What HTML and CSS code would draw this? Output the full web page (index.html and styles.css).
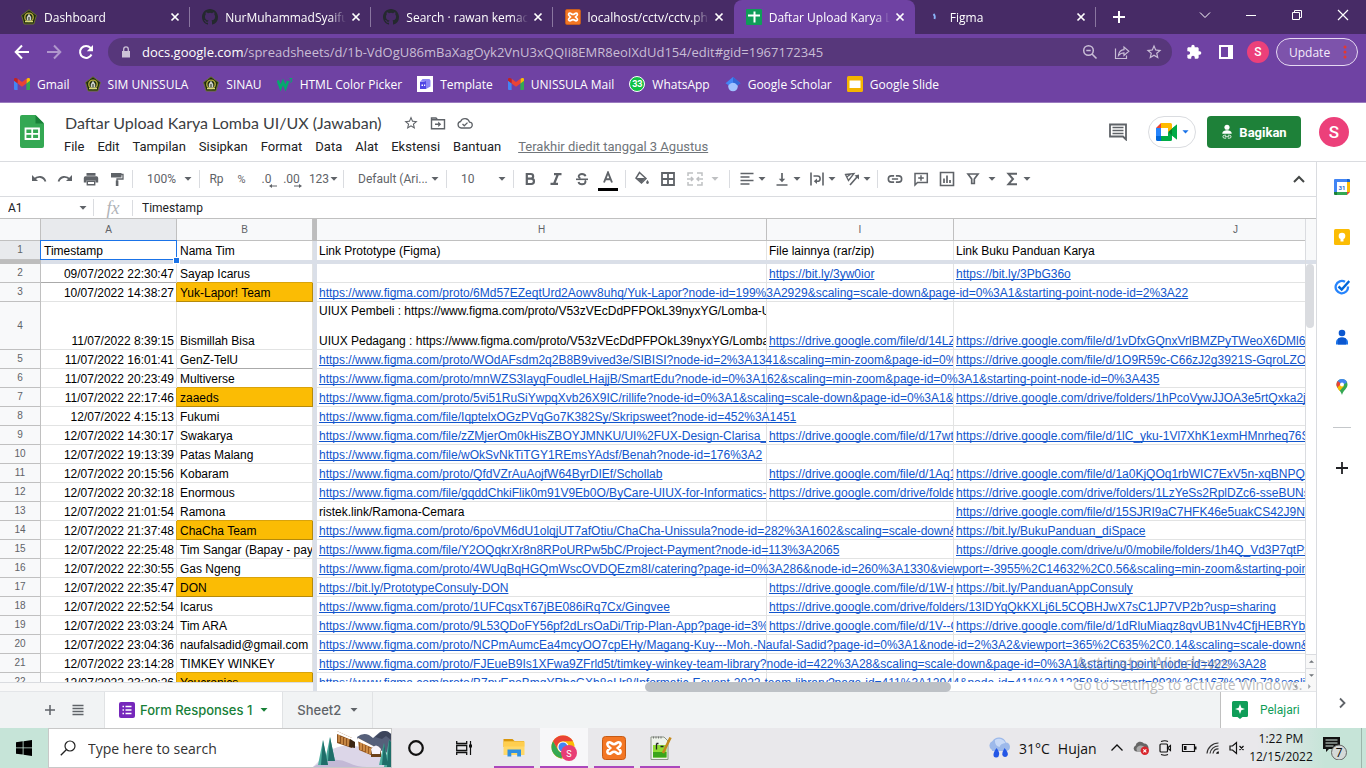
FILE: index.html
```html
<!DOCTYPE html>
<html lang="id">
<head>
<meta charset="utf-8">
<meta name="viewport" content="width=device-width, initial-scale=1">
<title>Daftar Upload Karya Lomba UI/UX (Jawaban)</title>
<link rel="stylesheet" href="styles.css">
</head>
<body>
<svg class="defs" aria-hidden="true">
  <symbol id="crest" viewBox="0 0 16 16"><path d="M8 .8 15.4 6.4 12.8 15H3.200L.6 6.400z" fill="#1d2a10" stroke="#6f7a28" stroke-width=".9"/><circle cx="8" cy="8.300" r="4.200" fill="none" stroke="#b3ab3c" stroke-width="1.400"/><path d="M8 4.800 10.200 8v3.600H5.800V8z" fill="#cfd2cb"/><path d="M4 12.600h8" stroke="#d8d87a" stroke-width="1.300"/><path d="M8 8v3" stroke="#1d2a10"/></symbol>
  <symbol id="github" viewBox="0 0 16 16"><path fill="#24292e" d="M8 0C3.58 0 0 3.58 0 8c0 3.54 2.29 6.53 5.47 7.59.4.07.55-.17.55-.38 0-.19-.01-.82-.01-1.49-2.01.37-2.53-.49-2.69-.94-.09-.23-.48-.94-.82-1.13-.28-.15-.68-.52-.01-.53.63-.01 1.08.58 1.23.82.72 1.21 1.87.87 2.33.66.07-.52.28-.87.51-1.07-1.78-.2-3.64-.89-3.64-3.95 0-.87.31-1.59.82-2.15-.08-.2-.36-1.02.08-2.12 0 0 .67-.21 2.2.82a7.6 7.6 0 0 1 4 0c1.53-1.04 2.2-.82 2.2-.82.44 1.1.16 1.92.08 2.12.51.56.82 1.27.82 2.15 0 3.07-1.87 3.75-3.65 3.95.29.25.54.73.54 1.48 0 1.07-.01 1.93-.01 2.2 0 .21.15.46.55.38A8 8 0 0 0 16 8c0-4.42-3.58-8-8-8z"/></symbol>
  <symbol id="xampp" viewBox="0 0 24 24"><rect x=".5" y=".5" width="23" height="23" rx="3" fill="#f37623" stroke="#c65a14"/><path d="M7.4 6.2c-2 0-2.6 2.2-1.4 3.6L8.2 12 6 14.200c-1.200 1.400-.6 3.600 1.400 3.600 1.800 0 2.300-2 4.600-2s2.800 2 4.600 2c2 0 2.600-2.200 1.400-3.600L15.800 12 18 9.800c1.200-1.400.6-3.600-1.400-3.600-1.800 0-2.300 2-4.600 2s-2.800-2-4.600-2z" fill="none" stroke="#fff" stroke-width="2.600"/></symbol>
  <symbol id="gmail" viewBox="0 0 16 12"><path d="M0 1.500V11a1 1 0 0 0 1 1h2.600V4.600z" fill="#4285f4"/><path d="M16 1.500V11a1 1 0 0 1-1 1h-2.600V4.600z" fill="#34a853"/><path d="M12.400 1v4.400L16 2.800V1.400C16 0 14.500-.4 13.500.2z" fill="#fbbc04"/><path d="M3.600 5.400V.8L8 4.100 12.400.8v4.600L8 8.700z" fill="#ea4335"/><path d="M0 1.400v1.400l3.600 2.600V.8L2.500.2C1.500-.4 0 0 0 1.400z" fill="#c5221f"/></symbol>
  <symbol id="x" viewBox="0 0 10 10"><path d="M1.500 1.500l7 7M8.500 1.500l-7 7" stroke="currentColor" stroke-width="1.700"/></symbol>
  <symbol id="arr" viewBox="0 0 8 4"><path d="M.5 0h7L4 3.800z" fill="currentColor"/></symbol>
  <symbol id="star" viewBox="0 0 24 24"><path fill="currentColor" d="M22 9.240l-7.190-.62L12 2 9.190 8.630 2 9.240l5.460 4.730L5.820 21 12 17.270 18.180 21l-1.630-7.030L22 9.240zM12 15.400l-3.760 2.270 1-4.280-3.320-2.880 4.380-.38L12 6.100l1.710 4.040 4.380.38-3.320 2.880 1 4.280L12 15.400z"/></symbol>
</svg>

<header class="browser">
  <div class="tabstrip">
    <div class="tabs">
      <div class="tab"><svg class="fav"><use href="#crest"/></svg><span class="tab-title">Dashboard</span><button class="close" aria-label="Close tab"><svg><use href="#x"/></svg></button></div>
      <div class="tab"><svg class="fav"><use href="#github"/></svg><span class="tab-title">NurMuhammadSyaifudin</span><button class="close" aria-label="Close tab"><svg><use href="#x"/></svg></button></div>
      <div class="tab"><svg class="fav"><use href="#github"/></svg><span class="tab-title">Search · rawan kemacetan</span><button class="close" aria-label="Close tab"><svg><use href="#x"/></svg></button></div>
      <div class="tab before-active"><svg class="fav"><use href="#xampp"/></svg><span class="tab-title">localhost/cctv/cctv.php</span><button class="close" aria-label="Close tab"><svg><use href="#x"/></svg></button></div>
      <div class="tab active"><svg class="fav" viewBox="0 0 16 16"><rect width="16" height="16" rx="1" fill="#0f9d58"/><path d="M2 6.500h12M8.500 2.500v11" stroke="#fff" stroke-width="2"/></svg><span class="tab-title">Daftar Upload Karya Lomba UI</span><button class="close" aria-label="Close tab"><svg><use href="#x"/></svg></button></div>
      <div class="tab"><svg class="fav" viewBox="0 0 16 16"><path d="M6.500 5q2 2 1 5" fill="none" stroke="#8ab4f8" stroke-width="1.800"/></svg><span class="tab-title">Figma</span><button class="close" aria-label="Close tab"><svg><use href="#x"/></svg></button></div>
    </div>
    <button class="newtab" aria-label="New tab"><svg viewBox="0 0 12 12"><path d="M6 0v12M0 6h12" stroke="#fff" stroke-width="2"/></svg></button>
    <div class="winctl">
      <button aria-label="Search tabs"><svg viewBox="0 0 12 12"><path d="M1 3.500l5 5 5-5" fill="none" stroke="#fff"/></svg></button>
      <button aria-label="Minimize"><svg viewBox="0 0 12 12"><path d="M1 6.500h10" stroke="#fff"/></svg></button>
      <button aria-label="Restore"><svg viewBox="0 0 12 12"><path d="M1.500 3.500h7v7h-7zM3.500 3V1.500h7v7H9" fill="none" stroke="#fff"/></svg></button>
      <button aria-label="Close"><svg viewBox="0 0 12 12"><path d="M1 1l10 10M11 1L1 11" stroke="#fff" stroke-width="1.200"/></svg></button>
    </div>
  </div>
  <div class="navbar">
    <button class="nav" aria-label="Back"><svg viewBox="0 0 16 16"><path d="M15 8H2M8 1.500L1.700 8 8 14.500" fill="none" stroke="#fff" stroke-width="2"/></svg></button>
    <button class="nav dim" aria-label="Forward"><svg viewBox="0 0 16 16"><path d="M1 8h13M8 1.500L14.300 8 8 14.500" fill="none" stroke="#fff" stroke-width="2"/></svg></button>
    <button class="nav" aria-label="Reload"><svg viewBox="0 0 16 16"><path d="M13.500 10.500A6 6 0 1 1 12.600 4L14 5.500" fill="none" stroke="#fff" stroke-width="2"/><path d="M15 1v6.200H8.800z" fill="#fff"/></svg></button>
    <div class="omnibox">
      <svg class="lock" viewBox="0 0 10 12"><path d="M1 5h8v6.500H1z" fill="#cdc3d7"/><path d="M2.700 5V3.200a2.300 2.300 0 0 1 4.600 0V5" fill="none" stroke="#cdc3d7" stroke-width="1.300"/></svg>
      <span class="url"><b>docs.google.com</b>/spreadsheets/d/1b-VdOgU86mBaXagOyk2VnU3xQQIi8EMR8eoIXdUd154/edit#gid=1967172345</span>
      <button aria-label="Zoom"><svg viewBox="0 0 16 16"><circle cx="6.500" cy="6.500" r="4.800" fill="none" stroke="#c9bdd6" stroke-width="1.500"/><path d="M10 10l4.500 4.500M4.300 6.500h4.400" stroke="#c9bdd6" stroke-width="1.600"/></svg></button>
      <button aria-label="Share"><svg viewBox="0 0 16 16"><path d="M1.500 4.500v10h11v-3M4.500 11.500c.5-4 2.800-5.600 5.500-5.800V3l4.800 4.300L10 11.400V8.800C7.500 8.800 6 9.600 4.500 11.500z" fill="none" stroke="#c9bdd6" stroke-width="1.200"/></svg></button>
      <button aria-label="Bookmark"><svg class="big"><use href="#star"/></svg></button>
    </div>
    <button class="nav" aria-label="Extensions"><svg viewBox="0 0 24 24"><path fill="#fff" d="M20.500 11H19V7c0-1.100-.9-2-2-2h-4V3.500a2.500 2.500 0 0 0-5 0V5H4c-1.100 0-2 .9-2 2v3.800h1.500a2.700 2.700 0 0 1 0 5.400H2V20c0 1.100.9 2 2 2h3.800v-1.500a2.700 2.700 0 0 1 5.400 0V22H17c1.100 0 2-.9 2-2v-4h1.500a2.500 2.500 0 0 0 0-5z"/></svg></button>
    <button class="nav" aria-label="Side panel"><svg viewBox="0 0 16 16"><path d="M2 2h12v12H2z" fill="none" stroke="#fff" stroke-width="2"/><path d="M10 2h4v12h-4z" fill="#fff"/></svg></button>
    <button class="nav" aria-label="Profile"><span class="avatar small">S</span></button>
    <button class="update">Update<svg viewBox="0 0 4 14"><circle cx="2" cy="2" r="1.500"/><circle cx="2" cy="7" r="1.500"/><circle cx="2" cy="12" r="1.500"/></svg></button>
  </div>
  <nav class="bookmarks">
    <a href="#"><svg class="fav"><use href="#gmail"/></svg>Gmail</a>
    <a href="#"><svg class="fav"><use href="#crest"/></svg>SIM UNISSULA</a>
    <a href="#"><svg class="fav"><use href="#crest"/></svg>SINAU</a>
    <a href="#"><svg class="fav" viewBox="0 0 16 16"><path d="M.8 4.500L3.500 12l2.500-6 2.500 6L11 5" fill="none" stroke="#04aa6d" stroke-width="2.600"/><path d="M12.500 2.500h2.500l-1.400 1.500q1.900 0 1.200 1.600-.8 1-2.300.2" fill="none" stroke="#04aa6d"/></svg>HTML Color Picker</a>
    <a href="#"><svg class="fav" viewBox="0 0 16 16"><rect width="16" height="16" fill="#fff"/><path d="M3 6l6-1v8H3z" fill="#4f46e5"/><path d="M5.500 3h7l1 1.500v6L9 13V5L3 6z" fill="#8b86f5"/><path d="M4.500 8.500h1.500v1.500H4.500zM7 8.500h1.200v1.500H7z" fill="#fff"/></svg>Template</a>
    <a href="#"><svg class="fav"><use href="#gmail"/></svg>UNISSULA Mail</a>
    <a href="#"><span class="wa">33</span>WhatsApp</a>
    <a href="#"><svg class="fav" viewBox="0 0 16 16"><circle cx="8" cy="10.500" r="4.800" fill="#a0c3ff"/><path d="M8 1L.5 7.200l3.200 2a5 5 0 0 1 8.600 0l3.200-2z" fill="#4285f4"/><path d="M8 1l7.500 6.200-3.200 2a5 5 0 0 0-4.300-2.700z" fill="#3367d6"/></svg>Google Scholar</a>
    <a href="#"><svg class="fav" viewBox="0 0 16 16"><rect width="16" height="16" rx="1.500" fill="#f4b400"/><path d="M2.500 4.500h11v7.500h-11z" fill="#fff"/></svg>Google Slide</a>
  </nav>
</header>

<main class="docs">
  <header class="dochead">
    <svg class="doclogo" viewBox="0 0 24 33"><path d="M2 0h13.500L24 8.500V31a2 2 0 0 1-2 2H2a2 2 0 0 1-2-2V2a2 2 0 0 1 2-2z" fill="#34a853"/><path d="M15.500 0L24 8.500h-8.500z" fill="#188038"/><path d="M5.500 13.500h13.500v10.500H5.500zM5.500 18.800H19M12.200 13.500V24" fill="none" stroke="#fff" stroke-width="1.800"/></svg>
    <div class="docinfo">
      <div class="titleline">
        <h1>Daftar Upload Karya Lomba UI/UX (Jawaban)</h1>
        <button aria-label="Bintangi"><svg><use href="#star"/></svg></button>
        <button aria-label="Pindahkan"><svg viewBox="0 0 16 16"><path d="M1.500 3h4.500l1.500 1.700h7v9h-13zM1.500 4.700h6" fill="none" stroke="currentColor" stroke-width="1.400"/><path d="M5 8.500h3.200V6.500l3 2.700-3 2.700V10H5z" fill="currentColor"/></svg></button>
        <button aria-label="Status dokumen"><svg viewBox="0 0 16 16"><path d="M4.200 13a3.300 3.300 0 0 1-.6-6.500 4.700 4.700 0 0 1 8.900.7 2.900 2.900 0 0 1-.3 5.800z" fill="none" stroke="currentColor" stroke-width="1.300"/><path d="M5.500 9l1.800 1.800 3.200-3.200" fill="none" stroke="currentColor" stroke-width="1.300"/></svg></button>
      </div>
      <nav class="menu">
        <button>File</button><button>Edit</button><button>Tampilan</button><button>Sisipkan</button><button>Format</button><button>Data</button><button>Alat</button><button>Ekstensi</button><button>Bantuan</button>
        <a class="lastedit" href="#">Terakhir diedit tanggal 3 Agustus</a>
      </nav>
    </div>
    <div class="docactions">
      <button class="comment" aria-label="Komentar"><svg viewBox="0 0 18 18"><path d="M1 1.500h16v15l-3-3H1z" fill="none" stroke="#5f6368" stroke-width="1.800"/><path d="M3.500 4.500h11M3.500 7.500h11M3.500 10.500h11" stroke="#5f6368" stroke-width="1.500"/></svg></button>
      <button class="meet" aria-label="Meet"><svg viewBox="0 0 22 18"><path d="M0 5h5v8H0z" fill="#2684fc"/><path d="M5 0v5H0z" fill="#ea4335"/><path d="M5 0h9.500a1.500 1.500 0 0 1 1.500 1.500V7l-4 2V5H5z" fill="#ffba00"/><path d="M0 13h5v5H1.500A1.500 1.500 0 0 1 0 16.500z" fill="#0066da"/><path d="M5 13h7V9l4 2v5.500a1.500 1.500 0 0 1-1.500 1.500H5z" fill="#00ac47"/><path d="M12 9l9-7.500v15z" fill="#00832d"/><path d="M16 5.500l5-4v15l-5-4z" fill="#00ac47"/></svg><svg class="arrow"><use href="#arr"/></svg></button>
      <button class="share"><svg viewBox="0 0 14 18"><circle cx="7" cy="3.500" r="3" fill="#fff"/><path d="M1.500 11c0-3 3-4 5.500-4s5.500 1 5.500 4z" fill="#fff"/><path d="M6 12.800H4a1.700 1.700 0 0 0 0 3.400h2M8 12.800h2a1.700 1.700 0 0 1 0 3.400H8M4.500 14.500h5" fill="none" stroke="#fff" stroke-width="1"/></svg>Bagikan</button>
      <span class="avatar">S</span>
    </div>
  </header>

  <div class="workspace">
    <section class="sheet">
      <div class="toolbar">
        <div class="grp first">
          <button aria-label="Urungkan"><svg viewBox="0 0 16 16"><path d="M1 4v6h6z" fill="currentColor"/><path d="M3 8.500q3-3 6.500-2.500 3.500.5 5 4.500" fill="none" stroke="currentColor" stroke-width="1.800"/></svg></button>
          <button aria-label="Ulangi"><svg viewBox="0 0 16 16"><path d="M15 4v6H9z" fill="currentColor"/><path d="M13 8.500q-3-3-6.500-2.500-3.500.5-5 4.500" fill="none" stroke="currentColor" stroke-width="1.800"/></svg></button>
          <button aria-label="Cetak"><svg viewBox="0 0 16 16"><path d="M3.500 2h9v2.800h-9zM2.500 5.300h11a1.700 1.700 0 0 1 1.700 1.700v4.500h-2.700V9.500h-9v2H.8V7a1.700 1.700 0 0 1 1.700-1.700z" fill="currentColor"/><path d="M4.300 10.300h7.400v3.400H4.300z" fill="none" stroke="currentColor" stroke-width="1.400"/></svg></button>
          <button aria-label="Format cat"><svg viewBox="0 0 16 16"><path d="M2 2h10.500v4.500H2z" fill="currentColor"/><path d="M12 3.500h2V8H8v2" fill="none" stroke="currentColor" stroke-width="1.300"/><path d="M6.800 9.500h2.600V15H6.800z" fill="currentColor"/></svg></button>
        </div>
        <div class="grp pick"><button>100%<svg class="arrow"><use href="#arr"/></svg></button></div>
        <div class="grp nums"><button>Rp</button><button class="pct">%</button><button class="dec">.0<svg viewBox="0 0 8 4"><path d="M8 2H2" stroke="currentColor"/><path d="M3 0v4L0 2z" fill="currentColor"/></svg></button><button class="dec">.00<svg viewBox="0 0 8 4"><path d="M0 2h6" stroke="currentColor"/><path d="M5 0v4l3-2z" fill="currentColor"/></svg></button><button class="fmt">123<svg class="arrow"><use href="#arr"/></svg></button></div>
        <div class="grp pick font"><button>Default (Ari...<svg class="arrow"><use href="#arr"/></svg></button></div>
        <div class="grp pick size"><button>10<svg class="arrow"><use href="#arr"/></svg></button></div>
        <div class="grp four">
          <button aria-label="Tebal"><svg viewBox="0 0 16 16"><path d="M4.800 3h4a2.300 2.300 0 0 1 0 4.700h-4zM4.800 7.700h4.500a2.600 2.600 0 0 1 0 5.300H4.800z" fill="none" stroke="currentColor" stroke-width="2.200"/></svg></button>
          <button aria-label="Miring"><svg viewBox="0 0 16 16"><path d="M6 3.200h7.500M2.500 12.800H10M9.800 3.500L6.200 12.500" fill="none" stroke="currentColor" stroke-width="2.200"/></svg></button>
          <button aria-label="Coret"><svg viewBox="0 0 16 16"><path d="M2 8.300h12" stroke="currentColor" stroke-width="1.600"/><path d="M11.500 5.200C11 3.500 9.700 3 8 3 6 3 4.600 4 4.700 5.500c.1 1 .8 1.500 1.800 2M4.500 11c.4 1.700 1.800 2.300 3.500 2.300 2 0 3.500-.9 3.500-2.500 0-.6-.2-1-.6-1.500" fill="none" stroke="currentColor" stroke-width="1.900"/></svg></button>
          <button class="color" aria-label="Warna teks"><svg viewBox="0 0 16 16"><path d="M4 11.500L8 1.500l4 10M5.300 8.300h5.400" fill="none" stroke="currentColor" stroke-width="1.900"/></svg></button>
        </div>
        <div class="grp four fills">
          <button aria-label="Warna isian"><svg viewBox="0 0 16 16"><path d="M5.500 1.500L12 7.500 7.500 12 2 7z" fill="none" stroke="currentColor" stroke-width="1.500"/><path d="M2.500 7h9L7.300 11.500z" fill="currentColor"/><path d="M13.500 9s1.400 1.700 1.400 2.500a1.400 1.400 0 0 1-2.800 0c0-.8 1.400-2.500 1.400-2.500z" fill="currentColor"/></svg></button>
          <button aria-label="Batas"><svg viewBox="0 0 16 16"><path d="M2 2h12v12H2zM8 2v12M2 8h12" fill="none" stroke="currentColor" stroke-width="1.800"/></svg></button>
          <button class="merge" aria-label="Gabungkan sel"><svg viewBox="0 0 16 16"><path d="M1 5V2h5M10 2h5v3M1 11v3h5M10 14h5v-3M0 8h6M16 8h-6M4 6l2 2-2 2M12 6l-2 2 2 2" fill="none" stroke="currentColor" stroke-width="1.500"/></svg><svg class="arrow"><use href="#arr"/></svg></button>
        </div>
        <div class="grp pairs">
          <button aria-label="Perataan horizontal"><svg viewBox="0 0 16 16"><path d="M1.500 2.500h13M1.500 6h9M1.500 9.500h13M1.500 13h9" stroke="currentColor" stroke-width="1.700"/></svg><svg class="arrow"><use href="#arr"/></svg></button>
          <button aria-label="Perataan vertikal"><svg viewBox="0 0 16 16"><path d="M2.500 14h11M8 2v7" stroke="currentColor" stroke-width="1.700"/><path d="M4.800 7.800h6.400L8 11.300z" fill="currentColor"/></svg><svg class="arrow"><use href="#arr"/></svg></button>
          <button aria-label="Pengemasan teks"><svg viewBox="0 0 16 16"><path d="M2 1.500v13M14 1.500v13" stroke="currentColor" stroke-width="1.600"/><path d="M4.500 5h4a2.600 2.600 0 0 1 0 5.300H6" fill="none" stroke="currentColor" stroke-width="1.500"/><path d="M8 7.500v5.500L4.800 10.300z" fill="currentColor"/></svg><svg class="arrow"><use href="#arr"/></svg></button>
          <button aria-label="Rotasi teks"><svg viewBox="0 0 16 16"><path d="M1.500 3.500L10 2.500 4.500 9.500zM3 5.800L7 3" fill="none" stroke="currentColor" stroke-width="1.300"/><path d="M6 14l7-8" stroke="currentColor" stroke-width="1.600"/><path d="M15 3.500v5L10.500 4.500z" fill="currentColor"/></svg><svg class="arrow"><use href="#arr"/></svg></button>
        </div>
        <div class="grp last">
          <button aria-label="Sisipkan link"><svg viewBox="0 0 18 16"><path d="M8 4.500H5a3.500 3.500 0 0 0 0 7h3M10 4.500h3a3.500 3.500 0 0 1 0 7h-3M5.500 8h7" fill="none" stroke="currentColor" stroke-width="1.800"/></svg></button>
          <button aria-label="Sisipkan komentar"><svg viewBox="0 0 16 16"><path d="M2 2.500h12.300v9H4.500L2 14z" fill="none" stroke="currentColor" stroke-width="1.500"/><path d="M8 4.200v5.600M5.200 7h5.600" stroke="currentColor" stroke-width="1.500"/></svg></button>
          <button aria-label="Sisipkan diagram"><svg viewBox="0 0 16 16"><path d="M1.500 1.500h13v13h-13z" fill="none" stroke="currentColor" stroke-width="1.600"/><path d="M5 7.500V12M8 4.500V12M11 9v3" stroke="currentColor" stroke-width="1.700"/></svg></button>
          <button aria-label="Filter"><svg viewBox="0 0 16 16"><path d="M3 3h10L9.300 8v4.500H6.700V8z" fill="none" stroke="currentColor" stroke-width="1.700"/></svg></button>
          <button class="only" aria-label="Tampilan filter"><svg class="arrow"><use href="#arr"/></svg></button>
          <button class="sigma" aria-label="Fungsi"><svg viewBox="0 0 16 16"><path d="M13 2.800H4.500L9 8l-4.500 5.200H13" fill="none" stroke="currentColor" stroke-width="2"/></svg><svg class="arrow"><use href="#arr"/></svg></button>
        </div>
        <button class="collapse" aria-label="Sembunyikan menu"><svg viewBox="0 0 12 8"><path d="M1 7l5-5 5 5" fill="none" stroke="#444746" stroke-width="2"/></svg></button>
      </div>

      <div class="formula">
        <label class="namebox"><input type="text" value="A1" aria-label="Kotak nama"><svg class="arrow"><use href="#arr"/></svg></label>
        <span class="fx">fx</span>
        <input class="fval" type="text" value="Timestamp" aria-label="Formula">
      </div>

      <div class="gridarea">
        <div class="viewport">
          <table class="grid">
            <colgroup><col class="c-n"><col class="c-a"><col class="c-a"><col class="c-gap"><col class="c-h"><col class="c-i"><col class="c-j"></colgroup>
            <thead>
              <tr class="cols"><th></th><th class="sel">A</th><th>B</th><th class="gap"></th><th>H</th><th>I</th><th>J</th></tr>
              <tr class="frozen"><th class="sel">1</th><td class="current">Timestamp</td><td>Nama Tim</td><td class="gap"></td><td>Link Prototype (Figma)</td><td>File lainnya (rar/zip)</td><td>Link Buku Panduan Karya</td></tr>
              <tr class="band"><th></th><td colspan="6"></td></tr>
            </thead>
            <tbody>
              <tr><th>2</th><td class="dk">09/07/2022 22:30:47</td><td class="gold-next">Sayap Icarus</td><td class="gap"></td><td></td><td><a href="#">https://bit.ly/3yw0ior</a></td><td><a href="#">https://bit.ly/3PbG36o</a></td></tr>
              <tr><th>3</th><td>10/07/2022 14:38:27</td><td class="gold">Yuk-Lapor! Team</td><td class="gap"></td><td><a href="#">https://www.figma.com/proto/6Md57EZeqtUrd2Aowv8uhq/Yuk-Lapor?node-id=199%3A2929&amp;scaling=scale-down&amp;page-id=0%3A1&amp;starting-point-node-id=2%3A22</a></td><td></td><td></td></tr>
              <tr class="tall"><th>4</th><td>11/07/2022 8:39:15</td><td>Bismillah Bisa</td><td class="gap"></td><td class="clip multi">UIUX Pembeli : https://www.figma.com/proto/V53zVEcDdPFPOkL39nyxYG/Lomba-U<br><br>UIUX Pedagang : https://www.figma.com/proto/V53zVEcDdPFPOkL39nyxYG/Lomba</td><td class="clip"><a href="#">https://drive.google.com/file/d/14LZ</a></td><td><a href="#">https://drive.google.com/file/d/1vDfxGQnxVrlBMZPyTWeoX6DMl6z8</a></td></tr>
              <tr><th>5</th><td>11/07/2022 16:01:41</td><td class="dk">GenZ-TelU</td><td class="gap"></td><td><div class="span2"><a href="#">https://www.figma.com/proto/WOdAFsdm2q2B8B9vived3e/SIBISI?node-id=2%3A1341&amp;scaling=min-zoom&amp;page-id=0%3</a></div></td><td></td><td><a href="#">https://drive.google.com/file/d/1O9R59c-C66zJ2g3921S-GqroLZOk</a></td></tr>
              <tr><th>6</th><td>11/07/2022 20:23:49</td><td class="gold-next">Multiverse</td><td class="gap"></td><td><a href="#">https://www.figma.com/proto/mnWZS3IayqFoudleLHajjB/SmartEdu?node-id=0%3A162&amp;scaling=min-zoom&amp;page-id=0%3A1&amp;starting-point-node-id=0%3A435</a></td><td></td><td></td></tr>
              <tr><th>7</th><td>11/07/2022 22:17:46</td><td class="gold">zaaeds</td><td class="gap"></td><td><div class="span2"><a href="#">https://www.figma.com/proto/5vi51RuSiYwpqXvb26X9IC/rillife?node-id=0%3A1&amp;scaling=scale-down&amp;page-id=0%3A1&amp;s</a></div></td><td></td><td><a href="#">https://drive.google.com/drive/folders/1hPcoVywJJOA3e5rtQxka2jd</a></td></tr>
              <tr><th>8</th><td>12/07/2022 4:15:13</td><td>Fukumi</td><td class="gap"></td><td><a href="#">https://www.figma.com/file/IqptelxOGzPVqGo7K382Sy/Skripsweet?node-id=452%3A1451</a></td><td></td><td></td></tr>
              <tr><th>9</th><td>12/07/2022 14:30:17</td><td>Swakarya</td><td class="gap"></td><td class="clip"><a href="#">https://www.figma.com/file/zZMjerOm0kHisZBOYJMNKU/UI%2FUX-Design-Clarisa_S</a></td><td class="clip"><a href="#">https://drive.google.com/file/d/17wtx</a></td><td><a href="#">https://drive.google.com/file/d/1lC_yku-1Vl7XhK1exmHMnrheq76S2</a></td></tr>
              <tr><th>10</th><td>12/07/2022 19:13:39</td><td>Patas Malang</td><td class="gap"></td><td><a href="#">https://www.figma.com/file/wOkSvNkTiTGY1REmsYAdsf/Benah?node-id=176%3A2</a></td><td></td><td></td></tr>
              <tr><th>11</th><td>12/07/2022 20:15:56</td><td>Kobaram</td><td class="gap"></td><td class="clip"><a href="#">https://www.figma.com/proto/QfdVZrAuAojfW64ByrDIEf/Schollab</a></td><td class="clip"><a href="#">https://drive.google.com/file/d/1Aq1</a></td><td><a href="#">https://drive.google.com/file/d/1a0KjQOq1rbWIC7ExV5n-xqBNPQ9</a></td></tr>
              <tr><th>12</th><td>12/07/2022 20:32:18</td><td>Enormous</td><td class="gap"></td><td class="clip"><a href="#">https://www.figma.com/file/gqddChkiFlik0m91V9Eb0O/ByCare-UIUX-for-Informatics-S</a></td><td class="clip"><a href="#">https://drive.google.com/drive/folder</a></td><td><a href="#">https://drive.google.com/drive/folders/1LzYeSs2RplDZc6-sseBUNs</a></td></tr>
              <tr><th>13</th><td>12/07/2022 21:01:54</td><td class="gold-next">Ramona</td><td class="gap"></td><td>ristek.link/Ramona-Cemara</td><td></td><td><a href="#">https://drive.google.com/file/d/15SJRI9aC7HFK46e5uakCS42J9Nk</a></td></tr>
              <tr><th>14</th><td>12/07/2022 21:37:48</td><td class="gold">ChaCha Team</td><td class="gap"></td><td><div class="span2"><a href="#">https://www.figma.com/proto/6poVM6dU1olqjUT7afOtiu/ChaCha-Unissula?node-id=282%3A1602&amp;scaling=scale-down&amp;</a></div></td><td></td><td><a href="#">https://bit.ly/BukuPanduan_diSpace</a></td></tr>
              <tr><th>15</th><td>12/07/2022 22:25:48</td><td class="clip">Tim Sangar (Bapay - pay</td><td class="gap"></td><td><a href="#">https://www.figma.com/file/Y2OQqkrXr8n8RPoURPw5bC/Project-Payment?node-id=113%3A2065</a></td><td></td><td><a href="#">https://drive.google.com/drive/u/0/mobile/folders/1h4Q_Vd3P7qtPx</a></td></tr>
              <tr><th>16</th><td>12/07/2022 22:30:55</td><td class="gold-next">Gas Ngeng</td><td class="gap"></td><td><a href="#">https://www.figma.com/proto/4WUqBqHGQmWscOVDQEzm8I/catering?page-id=0%3A286&amp;node-id=260%3A1330&amp;viewport=-3955%2C14632%2C0.56&amp;scaling=min-zoom&amp;starting-point-node</a></td><td></td><td></td></tr>
              <tr><th>17</th><td>12/07/2022 22:35:47</td><td class="gold">DON</td><td class="gap"></td><td><a href="#">https://bit.ly/PrototypeConsuly-DON</a></td><td class="clip"><a href="#">https://drive.google.com/file/d/1W-m</a></td><td><a href="#">https://bit.ly/PanduanAppConsuly</a></td></tr>
              <tr><th>18</th><td>12/07/2022 22:52:54</td><td>Icarus</td><td class="gap"></td><td><a href="#">https://www.figma.com/proto/1UFCqsxT67jBE086iRq7Cx/Gingvee</a></td><td><a href="#">https://drive.google.com/drive/folders/13IDYqQkKXLj6L5CQBHJwX7sC1JP7VP2b?usp=sharing</a></td><td></td></tr>
              <tr><th>19</th><td>12/07/2022 23:03:24</td><td>Tim ARA</td><td class="gap"></td><td class="clip"><a href="#">https://www.figma.com/proto/9L53QDoFY56pf2dLrsOaDi/Trip-Plan-App?page-id=3%3</a></td><td class="clip"><a href="#">https://drive.google.com/file/d/1V--G</a></td><td><a href="#">https://drive.google.com/file/d/1dRluMiaqz8qvUB1Nv4CfjHEBRYbs</a></td></tr>
              <tr><th>20</th><td>12/07/2022 23:04:36</td><td>naufalsadid@gmail.com</td><td class="gap"></td><td><a href="#">https://www.figma.com/proto/NCPmAumcEa4mcyOO7cpEHy/Magang-Kuy---Moh.-Naufal-Sadid?page-id=0%3A1&amp;node-id=2%3A2&amp;viewport=365%2C635%2C0.14&amp;scaling=scale-down&amp;start</a></td><td></td><td></td></tr>
              <tr><th>21</th><td>12/07/2022 23:14:28</td><td class="gold-next">TIMKEY WINKEY</td><td class="gap"></td><td><a href="#">https://www.figma.com/proto/FJEueB9Is1XFwa9ZFrld5t/timkey-winkey-team-library?node-id=422%3A28&amp;scaling=scale-down&amp;page-id=0%3A1&amp;starting-point-node-id=422%3A28</a></td><td></td><td></td></tr>
              <tr><th>22</th><td>12/07/2022 23:29:26</td><td class="gold">Youcronics</td><td class="gap"></td><td><a href="#">https://www.figma.com/proto/B7pyEnoBmqYRhcGXh8eUr8/Informatic-Eevent-2022-team-library?page-id=411%3A12944&amp;node-id=411%3A12258&amp;viewport=992%2C1167%2C0.72&amp;scaling</a></td><td></td><td></td></tr>
            </tbody>
          </table>
        </div>
        <div class="vscroll"><div class="vhead"></div><div class="vtrack"><div class="vthumb"></div></div><button aria-label="Ke atas"><svg viewBox="0 0 8 4"><path d="M4 0l4 4H0z" fill="#70757a"/></svg></button><button aria-label="Ke bawah"><svg viewBox="0 0 8 4"><path d="M0 0h8L4 4z" fill="#70757a"/></svg></button></div>
      </div>
      <div class="hscroll"><div class="hpad"></div><div class="hgap"></div><div class="htrack"><div class="hthumb"></div></div><button aria-label="Ke kiri"><svg viewBox="0 0 4 8"><path d="M4 0v8L0 4z" fill="#9aa0a6"/></svg></button><button aria-label="Ke kanan"><svg viewBox="0 0 4 8"><path d="M0 0v8l4-4z" fill="#9aa0a6"/></svg></button></div>

      <div class="sheetbar">
        <button class="add" aria-label="Tambah sheet"><svg viewBox="0 0 10 10"><path d="M5 0v10M0 5h10" stroke="#5f6368" stroke-width="1.500"/></svg></button>
        <button class="list" aria-label="Semua sheet"><svg viewBox="0 0 12 12"><path d="M.5 1.500h11M.5 4.500h11M.5 7.500h11M.5 10.500h11" stroke="#5f6368" stroke-width="1.600"/></svg></button>
        <button class="stab on"><svg class="fav" viewBox="0 0 16 16"><rect width="16" height="16" rx="2" fill="#7627bb"/><path d="M3.500 4.500h1.500M6.500 4.500h6M3.500 8h1.500M6.500 8h6M3.500 11.500h1.500M6.500 11.500h6" stroke="#fff" stroke-width="1.500"/></svg>Form Responses 1<svg class="arrow"><use href="#arr"/></svg></button>
        <button class="stab">Sheet2<svg class="arrow"><use href="#arr"/></svg></button>
        <button class="explore"><svg viewBox="0 0 18 18"><path d="M2 0h12.500A1.500 1.500 0 0 1 16 1.500v13a1.500 1.500 0 0 1-1.500 1.500h-4L8 18l-2.500-2h-4A1.500 1.500 0 0 1 0 14.500v-13A1.500 1.500 0 0 1 1.500 0z" fill="#0f9d58"/><path d="M8 3l1.300 3.700L13 8 9.300 9.300 8 13 6.700 9.300 3 8l3.700-1.300z" fill="#fff"/></svg>Pelajari</button>
      </div>
    </section>

    <aside class="side">
      <button aria-label="Kalender"><svg viewBox="0 0 16 16"><path d="M1 0h12v3H3v10H0V1a1 1 0 0 1 1-1z" fill="#4285f4"/><path d="M13 0h2a1 1 0 0 1 1 1v2h-3z" fill="#1967d2"/><path d="M13 3h3v10h-3z" fill="#fbbc04"/><path d="M3 13h10v3H3z" fill="#34a853"/><path d="M0 13h3v3H1a1 1 0 0 1-1-1z" fill="#188038"/><path d="M13 13h3l-3 3z" fill="#ea4335"/><path d="M3 3h10v10H3z" fill="#fff"/><text x="8" y="10.800" text-anchor="middle" class="cal">31</text></svg></button>
      <button aria-label="Keep"><svg viewBox="0 0 16 16"><rect width="16" height="16" rx="1.500" fill="#fbbc04"/><circle cx="8" cy="7" r="3.300" fill="#fff"/><path d="M6.500 10h3v2.500h-3z" fill="#fff"/></svg></button>
      <button aria-label="Tasks"><svg viewBox="0 0 16 16"><path d="M14 7.500A6.200 6.200 0 1 1 11 2.800" fill="none" stroke="#2684fc" stroke-width="2.300"/><path d="M4.500 7.500l3.200 3L15.300 2" fill="none" stroke="#0066da" stroke-width="2.400"/></svg></button>
      <button aria-label="Kontak"><svg viewBox="0 0 16 16"><circle cx="8" cy="4" r="3.300" fill="#0b57d0"/><path d="M2 13.500C2 10.500 4.500 8.500 8 8.500s6 2 6 5V15.500H2z" fill="#1a73e8"/><path d="M4 9.600Q8 7.500 12 9.600V15.500H4z" fill="#0b57d0"/></svg></button>
      <button aria-label="Maps"><svg viewBox="0 0 16 16"><path d="M8 0a5.500 5.500 0 0 1 5.500 5.500C13.500 9.500 9.500 11 8 16 6.500 11 2.500 9.500 2.500 5.500A5.500 5.500 0 0 1 8 0z" fill="#34a853"/><path d="M8 0a5.500 5.500 0 0 1 5 3.200L6.500 8 3.500 2.300A5.500 5.500 0 0 1 8 0z" fill="#4285f4"/><path d="M3.700 2L8 5.500 3.500 8.800A6 6 0 0 1 3.700 2z" fill="#ea4335"/><path d="M3.300 8.500L7 5l3 2-4.500 5z" fill="#fbbc04"/><circle cx="8" cy="5.500" r="2" fill="#fff"/></svg></button>
      <hr>
      <button class="plus" aria-label="Dapatkan add-on"><svg viewBox="0 0 12 12"><path d="M6 0v12M0 6h12" stroke="#202124" stroke-width="1.800"/></svg></button>
      <button class="hide" aria-label="Sembunyikan panel samping"><svg viewBox="0 0 12 12"><path d="M4 1.500L8.500 6 4 10.500" fill="none" stroke="#5f6368" stroke-width="1.800"/></svg></button>
    </aside>
  </div>
</main>

<footer class="taskbar">
  <button class="start" aria-label="Start"><svg viewBox="0 0 16 16"><path d="M0 2.300L6.700 1.300v6.200H0zM7.500 1.200L16 0v7.500H7.500zM0 8.300h6.700v6.300L0 13.700zM7.500 8.300H16V16l-8.500-1.200z"/></svg></button>
  <label class="search">
    <svg class="lens" viewBox="0 0 16 16"><circle cx="10" cy="6" r="5" fill="none" stroke="#222" stroke-width="1.200"/><path d="M6.500 9.500L.8 15.200" stroke="#222" stroke-width="1.300"/></svg>
    <input type="text" placeholder="Type here to search">
    <svg class="art" viewBox="0 0 78 38"><path d="M44 8q6-5 12-2l4 3 7-6q6-3 11 2v20L46 14z" fill="#56607a"/><path d="M62 8l6-5q6-3 10 2v6l-5-4-4 3z" fill="#3d455c"/><path d="M0 38L16 22q8-5 20-6 20 2 42 14v8z" fill="#dcd6e8"/><path d="M0 38q20-12 36-4 8 4 18 4z" fill="#c3b9d6"/><path d="M24 2l15 7v10l-15-5z" fill="#8d5320"/><path d="M24 2l17 8v2L24 5z" fill="#fff"/><path d="M26 6v7M29 8v7M32 9v7M35 10v7" stroke="#d8964f" stroke-width="1.500"/><path d="M37 10l5 3v6l-6-1z" fill="#3c2613"/><path d="M45 9l15 8v10l-14-6z" fill="#9c5d24"/><path d="M45 9l17 9v2L44 12z" fill="#fff"/><path d="M48 14v7M51 15v7M54 17v7M57 19v6" stroke="#dd9a50" stroke-width="1.500"/><path d="M58 20q5-6 10 0v8H58z" fill="#6b4018"/><path d="M58 20q5-7 10 0l-1 5h-8z" fill="#f7f4fb"/><path d="M5 36l5-25 5 25zM12 32l5-24 5 24z" fill="#4fae9f"/><path d="M8 36l2-25 5 25zM15 32l2-24 5 24z" fill="#1f6e69"/><path d="M66 36l5-22 4 22zM71 38l5-27 2 2v25z" fill="#4fae9f"/><path d="M69 36l2-22 4 22zM74 38l2-27 2 2v25z" fill="#1f6e69"/></svg>
  </label>
  <button class="tk" aria-label="Cortana"><svg viewBox="0 0 16 16"><circle cx="8" cy="8" r="6.800" fill="none" stroke="#111" stroke-width="2.200"/></svg></button>
  <button class="tk" aria-label="Task view"><svg viewBox="0 0 16 16"><path d="M.7 1v2.500h10V1M.7 15v-2.500h10V15M.7 5.500h10v5H.7z" fill="none" stroke="#111" stroke-width="1.300"/><path d="M14.500 1v14" stroke="#111" stroke-width="1.200"/><path d="M13 4.500h3v3h-3z" fill="#111"/></svg></button>
  <div class="apps">
    <button class="run" aria-label="File Explorer"><svg class="app" viewBox="0 0 24 24"><path d="M1.500 3h9l2 2h9.500v6H1.500z" fill="#d9960b"/><path d="M1.500 5.500h21V19h-21z" fill="#ffd868"/><path d="M1.500 5.500h21v5h-21z" fill="#ffc83d" opacity=".6"/><path d="M5.500 20.500v-7h13.500v7h-3.800v-3.500H9.300v3.500z" fill="#2f8fe0"/></svg></button>
    <button class="run focus" aria-label="Google Chrome"><svg class="app wide" viewBox="0 0 26 26"><circle cx="12" cy="12" r="11.500" fill="#fbbc04"/><path d="M2 6.200A11.500 11.500 0 0 1 22 6.200H12A5.800 5.800 0 0 0 7 15z" fill="#ea4335"/><path d="M2 6.200l5 8.700a5.800 5.800 0 0 0 5 2.900l-1.500 5.600A11.500 11.500 0 0 1 2 6.200z" fill="#34a853"/><circle cx="12" cy="12" r="5.600" fill="#fff"/><circle cx="12" cy="12" r="4.500" fill="#4285f4"/><circle cx="18" cy="18" r="8" fill="#e83e76"/><text x="18" y="21.500" text-anchor="middle" class="badge-s">S</text></svg></button>
    <button class="run" aria-label="XAMPP"><svg class="app"><use href="#xampp"/></svg></button>
    <button class="run" aria-label="Notepad++"><svg class="app" viewBox="0 0 24 24"><path d="M3 1h13l4 4v18.500H3z" fill="#eef3ea" stroke="#8b9486"/><path d="M5 9h13.500v12.500H5z" fill="#8fdc35"/><path d="M5 16h13.500v5.500H5z" fill="#3aa51b"/><path d="M8.500 7.500v6M8.500 7.500h2M12.500 10.500h3" stroke="#222" stroke-width="1.300"/><path d="M22.500 1.500L15 17" stroke="#c48a1c" stroke-width="2.600"/><path d="M5 1.500h10" stroke="#777" stroke-dasharray="1 1.500" stroke-width="2"/></svg></button>
  </div>
  <div class="tray">
    <button class="weather"><svg viewBox="0 0 24 22"><path d="M5 13a5 5 0 0 1 .5-9A7.500 7.500 0 0 1 19 5.500 4.300 4.300 0 0 1 19.500 14H5z" fill="#9db9ea"/><path d="M8 3a7 7 0 0 1 10.500 3q-5 .5-6 4-5-1-4.500-7z" fill="#c9daf7"/><path d="M9.500 11q3.500 4.500 2.500 7a2.700 2.700 0 0 1-5.500-.5q0-2.500 3-6.500zM17.500 11q4 4.500 3.300 7a2.900 2.900 0 0 1-5.600-.5q0-2.500 2.300-6.500z" fill="#2457e6"/></svg><span>31°C</span><span>Hujan</span></button>
    <button aria-label="Ikon tersembunyi"><svg viewBox="0 0 16 16"><path d="M2.500 10.500L8 5l5.500 5.500" fill="none" stroke="#111" stroke-width="1.300"/></svg></button>
    <button aria-label="OneDrive"><svg viewBox="0 0 16 16"><path d="M3 11.500a3 3 0 0 1-.5-5.700A4.800 4.800 0 0 1 11 3.500a4.500 4.500 0 0 1 4.500 5l-5 3z" fill="#666"/><path d="M4 11q-2-4 3-5.500 5 0 5 3l-3 3z" fill="#aaa"/><circle cx="11.800" cy="10.800" r="4.200" fill="#d9272e"/><path d="M10.300 9.300l3 3M13.300 9.300l-3 3" stroke="#fff" stroke-width="1.100"/></svg></button>
    <button aria-label="Kamera"><svg viewBox="0 0 16 16"><rect x="3" y="4" width="7.500" height="8" rx="1" fill="none" stroke="#111" stroke-width="1.200"/><path d="M10.500 8l3-2.500v5zM4 1.500q4-1.500 7 0M4 14.500q4 1.500 7 0" fill="none" stroke="#111" stroke-width="1.100"/></svg></button>
    <button aria-label="Baterai"><svg viewBox="0 0 16 16"><path d="M1.500 4.500h12v7h-12z" fill="none" stroke="#111" stroke-width="1.200"/><path d="M14 6.500h1.500v3H14zM3 6h2.500v4H3z" fill="#111"/></svg></button>
    <button aria-label="Wi-Fi"><svg viewBox="0 0 16 16"><path d="M2 13.500A11.500 11.500 0 0 1 13.500 3M5 13.500A8.500 8.500 0 0 1 13.500 6M8 13.500A5.500 5.500 0 0 1 13.500 8.800" fill="none" stroke="#333" stroke-width="1.200"/><path d="M11 13.800a3 3 0 0 1 2.800-2.600v2.600z" fill="#111"/></svg></button>
    <button aria-label="Suara"><svg viewBox="0 0 16 16"><path d="M1 6h2.500L7.500 2.500v11L3.500 10H1zM10.500 6l4 4M14.500 6l-4 4" fill="none" stroke="#111" stroke-width="1.200"/></svg></button>
    <button class="clock">1:22 PM<br>12/15/2022</button>
    <button class="notif" aria-label="Notifikasi"><svg viewBox="0 0 24 24"><path d="M0 1h17v12H6l-3 3v-3H0z" fill="#111"/><path d="M2.500 4h12M2.500 7h12M2.500 10h8" stroke="#d6e8e0" stroke-width="1.200"/><circle cx="16" cy="16.500" r="7.500" fill="#d4d9d8" stroke="#666"/><text x="16" y="21" text-anchor="middle" class="badge-n">7</text></svg></button>
    <button class="desk" aria-label="Tampilkan desktop"></button>
  </div>
</footer>
<div class="watermark"><p class="wm1">Activate Windows</p><p class="wm2">Go to Settings to activate Windows.</p></div>
</body>
</html>
```
FILE: styles.css
```css
* { box-sizing: border-box; }
body { margin: 0; height: 100vh; display: flex; flex-direction: column; overflow: hidden; font-family: Roboto, "Liberation Sans", sans-serif; color: #202124; background: #fff; }
button { display: flex; align-items: center; justify-content: center; border: 0; background: none; padding: 0; margin: 0; color: inherit; font: inherit; white-space: nowrap; }
input { border: 0; outline: 0; background: none; padding: 0; font: inherit; color: inherit; min-width: 0; }
svg { width: 16px; height: 16px; flex: none; display: block; }
a { color: inherit; text-decoration: none; }
.defs { position: absolute; width: 0; height: 0; }
.arrow { width: 8px; height: 4px; }

/* Browser chrome */
.browser { flex: none; background: #6f42a3; color: #fff; font: 12px "Open Sans", sans-serif; border-bottom: 1px solid #9a7bbf; }
.tabstrip { display: flex; height: 34px; background: #472b66; }
.tabs { display: flex; width: 1096px; padding-left: 9px; }
.tab { flex: 1; min-width: 0; display: flex; align-items: center; gap: 7px; padding: 0 7px 0 12px; background: linear-gradient(#8a76a0, #8a76a0) right 7px / 1px 20px no-repeat; }
.tab.before-active { background: none; }
.tab.active { background: #6f42a3; border-radius: 8px 8px 0 0; }
.tab-title { flex: 1; min-width: 0; margin-right: -5px; overflow: hidden; white-space: nowrap; mask-image: linear-gradient(to right, #000 calc(100% - 16px), transparent); }
.close { width: 16px; height: 16px; }
.close svg { width: 10px; height: 10px; }
.newtab { width: 46px; }
.newtab svg { width: 12px; height: 12px; }
.winctl { margin-left: auto; display: flex; }
.winctl button { width: 46px; height: 29px; }
.winctl svg { width: 12px; height: 12px; }
.navbar { display: flex; height: 36px; align-items: center; padding: 0 8px 0 6px; }
.nav { width: 32px; height: 28px; }
.dim { opacity: .45; }
.omnibox { flex: 1; margin: 0 6px; height: 28px; border-radius: 14px; background: #57377b; display: flex; align-items: center; padding: 0 2px 0 13px; color: #c9bdd6; }
.lock { width: 10px; height: 12px; margin-right: 11px; }
.url { flex: 1; min-width: 0; overflow: hidden; white-space: nowrap; font-size: 13px; }
.url b { font-weight: 400; color: #fff; }
.omnibox button { width: 32px; height: 28px; }
.omnibox .big { width: 18px; height: 18px; }
.avatar { width: 30px; height: 30px; border-radius: 50%; background: #ec407a; color: #fff; font: 500 17px/30px Roboto, sans-serif; text-align: center; }
.avatar.small { width: 22px; height: 22px; font-size: 12px; line-height: 22px; }
.update { width: 82px; height: 28px; margin-left: 2px; border: 1px solid #e6d9f2; border-radius: 14px; background: #7d53ab; justify-content: space-between; padding: 0 10px 0 12px; color: #f5edfb; }
.update svg { width: 4px; height: 14px; fill: #e8372c; }
.bookmarks { display: flex; gap: 15px; height: 32px; align-items: center; padding: 0 14px 4px; }
.bookmarks a { display: flex; align-items: center; gap: 7px; white-space: nowrap; }
.wa { width: 16px; height: 16px; border-radius: 50%; background: #12c245; border: 1px solid #fff; font: 700 9px/14px Roboto, sans-serif; text-align: center; }

/* Document header */
.docs { flex: 1; min-height: 0; display: flex; flex-direction: column; }
.dochead { display: flex; flex: none; height: 58px; padding: 0 17px 0 20px; }
.doclogo { width: 24px; height: 33px; margin: 12px 20px 0 0; }
.docinfo { flex: 1; min-width: 0; padding-top: 8px; }
.titleline { display: flex; align-items: center; height: 23px; gap: 11px; color: #5f6368; }
.titleline h1 { margin: 0 10px 0 1px; font: 400 16px Lato, sans-serif; color: #3c4043; white-space: nowrap; }
.menu { display: flex; gap: 13px; height: 25px; align-items: center; font-size: 13px; }
.lastedit { color: #70757a; text-decoration: underline; margin-left: 4px; white-space: nowrap; }
.docactions { display: flex; align-items: center; gap: 11px; }
.comment { width: 18px; margin-right: 10px; }
.comment svg { width: 18px; height: 18px; }
.meet { width: 48px; height: 32px; border: 1px solid #dadce0; border-radius: 16px; gap: 4px; color: #1a73e8; }
.meet svg:first-child { width: 22px; height: 18px; }
.meet .arrow { width: 7px; }
.share { width: 94px; height: 32px; border-radius: 4px; background: #1e8139; color: #fff; gap: 6px; font-weight: 700; font-size: 13px; }
.share svg { width: 12px; height: 16px; }
.docactions .avatar { margin-left: 7px; }

/* Workspace */
.workspace { flex: 1; min-height: 0; display: flex; }
.sheet { flex: 1; min-width: 0; display: flex; flex-direction: column; }
.toolbar { display: flex; align-items: center; flex: none; height: 36px; border-top: 1px solid #dadce0; border-bottom: 1px solid #dadce0; color: #5f6368; font-size: 12px; }
.grp { display: flex; align-items: center; height: 18px; border-right: 1px solid #dadce0; }
.grp button { width: 26px; height: 26px; flex: none; }
.grp.first { padding: 0 2px 0 26px; }
.grp.pick button { width: 66px; justify-content: space-between; padding: 0 7px 0 14px; }
.grp.font button { width: 102px; }
.grp.nums { padding-left: 4px; }
.grp.nums button { width: 25px; position: relative; }
.grp.nums .fmt { width: 39px; gap: 1px; }
.pct { font-size: 11px; }
.dec svg { position: absolute; width: 8px; height: 4px; right: 2px; bottom: 4px; }
.four { padding: 0 4px 0 3px; }
.grp .color { box-shadow: inset 0 -3px #000; width: 20px; height: 24px; margin: 0 3px; }
.grp .merge { width: 44px; gap: 8px; opacity: .4; }
.pairs { padding: 0 2px 0 5px; }
.grp.pairs button { width: 35px; gap: 3px; }
.grp.last { border: 0; padding-left: 4px; }
.grp .only { width: 12px; }
.grp .sigma { width: 38px; gap: 3px; }
.collapse { margin-left: auto; width: 34px; height: 26px; }
.collapse svg { width: 12px; height: 8px; }
.formula { display: flex; align-items: center; flex: none; height: 21px; font-size: 12px; }
.namebox { display: flex; align-items: center; width: 94px; height: 17px; border-right: 1px solid #dadce0; padding: 0 6px 0 8px; color: #5f6368; }
.namebox input { flex: 1; color: #202124; }
.fx { width: 39px; border-right: 1px solid #dadce0; text-align: center; font: italic 18px/16px "Liberation Serif", serif; color: #b0b3b8; }
.fval { flex: 1; padding-left: 9px; }

/* Grid */
.gridarea { flex: 1; min-height: 0; display: flex; border-top: 1px solid #c0c0c0; }
.viewport { flex: 1; min-width: 0; overflow: hidden; }
.grid { table-layout: fixed; width: 1518px; border-collapse: separate; border-spacing: 0; font: 12px/18px "Liberation Sans", Arial, sans-serif; color: #000; }
.c-n { width: 41px; } .c-a { width: 136px; } .c-gap { width: 4px; } .c-h { width: 450px; } .c-i { width: 187px; } .c-j { width: 564px; }
.grid th { background: #f8f9fa; border-right: 1px solid #c0c0c0; border-bottom: 1px solid #c0c0c0; padding: 0; font-weight: 400; font-size: 10px; color: #5f6368; text-align: center; }
.grid td { height: 19px; border-right: 1px solid #e2e3e3; border-bottom: 1px solid #e2e3e3; padding: 0 2px; white-space: nowrap; vertical-align: bottom; }
.grid tbody td { padding-top: 2px; line-height: 16px; }
.grid td:nth-child(3) { padding-left: 3px; }
.grid tbody td:nth-child(2) { text-align: right; }
.cols th { height: 22px; }
.grid .sel { background: #e8eaed; }
.grid .gap { background: #dadfe8; border: 0; padding: 0; }
.grid th.gap { background: #bdbdbd; }
.grid .current { position: relative; padding-left: 3px; }
.current::before { content: ""; position: absolute; inset: -1px -1px 0 -1px; border: 1px solid #1a73e8; }
.current::after { content: ""; position: absolute; right: -3px; bottom: -3px; width: 5px; height: 5px; background: #1a73e8; box-shadow: 0 0 0 1px #fff; }
.frozen td { border-bottom: 0; }
.band th, .grid .band td { height: 4px; padding: 0; line-height: 0; border: 0; background: #dadfe8; }
.grid .band th { background: #bdbdbd; }
.grid .tall td { height: 48px; }
.grid tbody .multi { line-height: 15px; padding-top: 0; }
.grid .clip, .span2 { overflow: hidden; }
.span2 { width: 634px; }
.grid .dk { border-bottom-color: #aaa; }
.grid .gold { background: #fbbc04; border-color: #b58a0b; box-shadow: -1px 0 #d9a30c; }
.grid .gold-next { border-bottom-color: #d9a30c; }
.grid a { color: #1155cc; text-decoration: underline; text-decoration-skip-ink: none; text-underline-offset: 1px; }
.vscroll { width: 11px; flex: none; display: flex; flex-direction: column; border-left: 1px solid #dadce0; }
.vhead { height: 45px; background: #f8f9fa; border-bottom: 4px solid #dadfe8; }
.vtrack { flex: 1; padding-right: 1px; }
.vthumb { width: 8px; height: 64px; border-radius: 4px; background: #dadce0; }
.vscroll button { height: 14px; border-top: 1px solid #dadce0; background: #f8f8f8; }
.vscroll svg { width: 5px; height: 3px; }
.hscroll { flex: none; display: flex; height: 10px; border-bottom: 1px solid #e3e5e8; }
.hpad { width: 313px; background: #f8f8f8; border-top: 1px solid #dadce0; }
.hgap { width: 4px; background: #dadfe8; }
.htrack { flex: 1; display: flex; padding-left: 328px; }
.hthumb { width: 306px; height: 10px; border-radius: 5px; background: #bdc1c6; }
.hscroll button { width: 14px; background: #f8f8f8; }
.hscroll svg { width: 3px; height: 5px; }
.sheetbar { flex: none; display: flex; height: 36px; background: #f1f3f4; padding-left: 36px; font: 500 13px Inter, sans-serif; color: #5f6368; }
.add, .list { width: 28px; }
.add svg { width: 10px; height: 10px; }
.list svg { width: 12px; height: 12px; }
.stab { padding: 0 14px; gap: 6px; border-right: 1px solid #e0e2e4; }
.stab.on { margin-left: 12px; background: #fff; color: #188038; gap: 5px; border-left: 1px solid #e0e2e4; }
.stab .arrow { margin-left: 3px; }
.explore { width: 96px; margin-left: auto; background: #fff; border-left: 1px solid #c0c0c0; color: #0f9d58; font: 12px Roboto, sans-serif; justify-content: flex-start; padding-left: 11px; gap: 10px; }
.explore svg { width: 18px; height: 18px; }
.side { width: 50px; flex: none; display: flex; flex-direction: column; align-items: center; border: 1px solid #dadce0; border-width: 1px 0 0 1px; padding: 17px 0 14px; gap: 34px; }
.side hr { width: 18px; height: 1px; margin: -2px 0 0; border: 0; background: #c4c7ca; }
.plus svg, .hide svg { width: 12px; height: 12px; }
.hide { margin-top: auto; padding-bottom: 5px; }
.cal { font: 700 6px Roboto, sans-serif; fill: #1967d2; }

/* Taskbar */
.taskbar { flex: none; display: flex; height: 40px; background: linear-gradient(to right, #e9e8eb 92%, #c6e4d8 97%); font: 14px "Open Sans", sans-serif; color: #111; }
.start { width: 48px; background: #c6e4d8; }
.search { display: flex; align-items: center; width: 344px; height: 40px; background: #fff; border: 1px solid #c8c8c8; padding-left: 11px; color: #333; }
.search input { flex: 1; padding-left: 12px; }
.search input::placeholder { color: #333; opacity: 1; }
.search .art { width: 78px; height: 38px; }
.tk { width: 48px; }
.apps { display: flex; gap: 6px; margin-left: 6px; }
.run { width: 40px; border-bottom: 2px solid #ab47bc; padding-top: 2px; }
.run.focus { width: 48px; background: #f7f7f9; }
.app { width: 24px; height: 24px; }
.app.wide { width: 26px; height: 26px; }
.badge-s { font: 9px Roboto, sans-serif; fill: #fff; }
.badge-n { font: 12px Roboto, sans-serif; fill: #111; }
.tray { margin-left: auto; display: flex; }
.tray button { width: 24px; }
.tray .weather { width: 118px; gap: 8px; justify-content: flex-start; }
.weather svg { width: 24px; height: 22px; }
.tray .clock { width: 64px; font-size: 12px; line-height: 18px; text-align: center; }
.tray .notif { width: 44px; }
.tray .desk { width: 5px; margin-left: 4px; border-left: 1px solid #9db5ab; }
.notif svg { width: 24px; height: 24px; }
.watermark { position: absolute; right: 57px; bottom: 73px; width: 236px; color: rgba(120, 120, 120, .5); font-family: "Open Sans", sans-serif; white-space: nowrap; pointer-events: none; }
.watermark p { margin: 0; }
.wm1 { font-size: 19px; line-height: 24px; padding-left: 2px; }
.wm2 { font-size: 14px; line-height: 20px; }
```
